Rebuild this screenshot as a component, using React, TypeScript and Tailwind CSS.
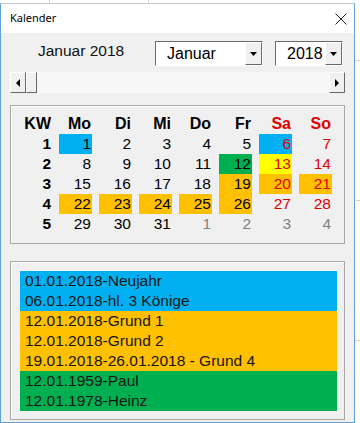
import React from "react";

type Cell = { n: number; bg?: string; color?: string };

const R = "text-[#e00000]";
const G = "text-[#808080]";

const weeks: { kw: number; days: Cell[] }[] = [
  {
    kw: 1,
    days: [
      { n: 1, bg: "bg-[#00b0f0]" },
      { n: 2 },
      { n: 3 },
      { n: 4 },
      { n: 5 },
      { n: 6, bg: "bg-[#00b0f0]", color: R },
      { n: 7, color: R },
    ],
  },
  {
    kw: 2,
    days: [
      { n: 8 },
      { n: 9 },
      { n: 10 },
      { n: 11 },
      { n: 12, bg: "bg-[#00b050]" },
      { n: 13, bg: "bg-[#ffff00]", color: R },
      { n: 14, color: R },
    ],
  },
  {
    kw: 3,
    days: [
      { n: 15 },
      { n: 16 },
      { n: 17 },
      { n: 18 },
      { n: 19, bg: "bg-[#ffc000]" },
      { n: 20, bg: "bg-[#ffc000]", color: R },
      { n: 21, bg: "bg-[#ffc000]", color: R },
    ],
  },
  {
    kw: 4,
    days: [
      { n: 22, bg: "bg-[#ffc000]" },
      { n: 23, bg: "bg-[#ffc000]" },
      { n: 24, bg: "bg-[#ffc000]" },
      { n: 25, bg: "bg-[#ffc000]" },
      { n: 26, bg: "bg-[#ffc000]" },
      { n: 27, color: R },
      { n: 28, color: R },
    ],
  },
  {
    kw: 5,
    days: [
      { n: 29 },
      { n: 30 },
      { n: 31 },
      { n: 1, color: G },
      { n: 2, color: G },
      { n: 3, color: G },
      { n: 4, color: G },
    ],
  },
];

const heads = [
  { t: "Mo", c: "text-black" },
  { t: "Di", c: "text-black" },
  { t: "Mi", c: "text-black" },
  { t: "Do", c: "text-black" },
  { t: "Fr", c: "text-black" },
  { t: "Sa", c: R },
  { t: "So", c: R },
];

const events: { t: string; bg: string }[] = [
  { t: "01.01.2018-Neujahr", bg: "bg-[#00b0f0]" },
  { t: "06.01.2018-hl. 3 Könige", bg: "bg-[#00b0f0]" },
  { t: "12.01.2018-Grund 1", bg: "bg-[#ffc000]" },
  { t: "12.01.2018-Grund 2", bg: "bg-[#ffc000]" },
  { t: "19.01.2018-26.01.2018 - Grund 4", bg: "bg-[#ffc000]" },
  { t: "12.01.1959-Paul", bg: "bg-[#00b050]" },
  { t: "12.01.1978-Heinz", bg: "bg-[#00b050]" },
];

function DropBtn() {
  return (
    <div className="w-[17px] h-full bg-[#f0f0f0] border-t border-l border-t-white border-l-white border-r border-b border-r-[#696969] border-b-[#696969] flex items-center justify-center">
      <svg width="7" height="4" viewBox="0 0 7 4">
        <path d="M0 0 H7 L3.5 4 Z" fill="#000" />
      </svg>
    </div>
  );
}

function RaisedBtn({ children, w }: { children?: React.ReactNode; w: string }) {
  return (
    <div
      className={`${w} h-full bg-[#f0f0f0] border-t border-l border-t-white border-l-white border-r border-b border-r-[#696969] border-b-[#696969] flex items-center justify-center`}
    >
      {children}
    </div>
  );
}

export default function App() {
  return (
    <div className="w-[360px] h-[423px] bg-white relative overflow-hidden font-['Liberation_Sans',Arial,sans-serif]">
      {/* spreadsheet grid bits behind */}
      <div className="absolute left-[49px] top-0 w-px h-[3px] bg-[#d4d4d4]" />
      <div className="absolute left-[148px] top-0 w-px h-[3px] bg-[#d4d4d4]" />
      <div className="absolute left-[356px] top-[60px] w-[4px] h-px bg-[#d4d4d4]" />
      <div className="absolute left-[356px] top-[200px] w-[4px] h-px bg-[#d4d4d4]" />
      <div className="absolute left-[356px] top-[340px] w-[4px] h-px bg-[#d4d4d4]" />

      <div className="mt-[3px] w-[355px] h-[420px] border border-[#5fa0de] border-t-[#c8c8c8] flex flex-col bg-[#f0f0f0]">
        {/* title bar */}
        <div className="h-[29px] bg-white flex items-center justify-between pl-[9px] pr-[6px] shrink-0">
          <span className="text-[11px] text-black font-['Noto_Sans',sans-serif]">Kalender</span>
          <svg width="12" height="12" viewBox="0 0 12 12" className="mr-[1px]">
            <path d="M0.5 0.5 L11.5 11.5 M11.5 0.5 L0.5 11.5" stroke="#222" strokeWidth="1" />
          </svg>
        </div>

        {/* body */}
        <div className="flex flex-col pl-[9px] pt-[8px]">
          {/* header row */}
          <div className="flex items-start h-[25px]">
            <div className="w-[116px] pl-[28px] text-[15.5px] leading-[18px] pt-[1px] text-[#111] whitespace-nowrap">
              Januar 2018
            </div>
            <div className="ml-[29px] w-[108px] h-[25px] flex border-t border-l border-t-[#696969] border-l-[#696969] border-r border-b border-r-white border-b-white bg-white">
              <div className="flex-1 pl-[11px] text-[16px] leading-[23px] text-black">Januar</div>
              <DropBtn />
            </div>
            <div className="ml-[12px] w-[68px] h-[25px] flex border-t border-l border-t-[#696969] border-l-[#696969] border-r border-b border-r-white border-b-white bg-white">
              <div className="flex-1 pl-[11px] text-[16px] leading-[23px] text-black">2018</div>
              <DropBtn />
            </div>
          </div>

          {/* scrollbar */}
          <div className="mt-[6px] w-[335px] h-[21px] flex bg-[#f7f7f7]">
            <RaisedBtn w="w-[16px]">
              <svg width="4" height="8" viewBox="0 0 4 8">
                <path d="M4 0 V8 L0 4 Z" fill="#000" />
              </svg>
            </RaisedBtn>
            <RaisedBtn w="w-[11px]" />
            <div className="flex-1" />
            <RaisedBtn w="w-[16px]">
              <svg width="4" height="8" viewBox="0 0 4 8">
                <path d="M0 0 V8 L4 4 Z" fill="#000" />
              </svg>
            </RaisedBtn>
          </div>

          {/* calendar frame */}
          <div className="mt-[12px] w-[335px] h-[139px] border border-[#a8a8a8] shadow-[inset_1px_1px_0_#ffffff] pt-[7px] text-[15.5px]">
            <div className="flex h-[21px] items-center gap-[7px] font-bold text-[16px]">
              <div className="w-[41px] text-right pr-[1px] text-black">KW</div>
              {heads.map((h) => (
                <div key={h.t} className={`w-[33px] text-right pr-[1px] ${h.c}`}>
                  {h.t}
                </div>
              ))}
            </div>
            {weeks.map((w) => (
              <div key={w.kw} className="flex h-[20px] gap-[7px]">
                <div className="w-[41px] text-right pr-[1px] font-bold leading-[20px] text-black">
                  {w.kw}
                </div>
                {w.days.map((d, i) => (
                  <div
                    key={i}
                    className={`w-[33px] h-[20px] text-right pr-[1px] leading-[20px] ${d.bg ?? ""} ${d.color ?? "text-black"}`}
                  >
                    {d.n}
                  </div>
                ))}
              </div>
            ))}
          </div>

          {/* events frame */}
          <div className="mt-[17px] w-[335px] h-[159px] border border-[#a8a8a8] shadow-[inset_1px_1px_0_#ffffff] pt-[9px] pl-[9px]">
            <div className="w-[317px] flex flex-col">
              {events.map((e) => (
                <div
                  key={e.t}
                  className={`h-[20px] pl-[5px] leading-[20px] text-[15.5px] text-[#151515] whitespace-nowrap ${e.bg}`}
                >
                  {e.t}
                </div>
              ))}
            </div>
          </div>
        </div>
      </div>
    </div>
  );
}
